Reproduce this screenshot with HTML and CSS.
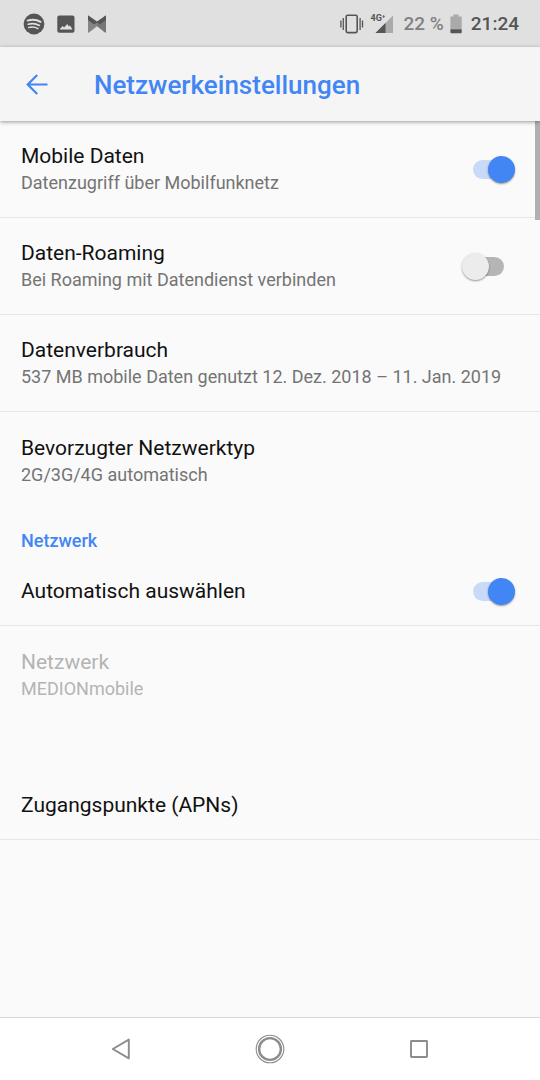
FILE: index.html
```html
<!DOCTYPE html>
<html lang="de">
<head>
<meta charset="utf-8">
<meta name="viewport" content="width=device-width, initial-scale=1">
<title>Netzwerkeinstellungen</title>
<link rel="stylesheet" href="styles.css">
</head>
<body>
<div class="status-bar">
  <div class="notifications">
    <svg width="22" height="22" viewBox="0 0 22 22" aria-hidden="true">
      <circle cx="11" cy="11" r="10.4" fill="#555"/>
      <g fill="none" stroke="#e0e0e0" stroke-linecap="round">
        <path d="M4.6 7.6c4.6-1.3 9.2-.9 13 1.2" stroke-width="2"/>
        <path d="M5.2 11.2c3.9-1.1 7.8-.7 11.2 1.2" stroke-width="1.7"/>
        <path d="M5.7 14.5c3.3-.8 6.5-.5 9.2 1.1" stroke-width="1.4"/>
      </g>
    </svg>
    <svg width="18" height="18" viewBox="0 0 18 18" aria-hidden="true">
      <rect x="0.3" y="0.5" width="17.2" height="17.2" rx="2" fill="#555"/>
      <path d="M2.5 14.5L5.6 11l1.5 1.6L10.300 9l1.500 2.500 1.200-.900 2.500 3.900z" fill="#e0e0e0"/>
    </svg>
    <svg width="20" height="18" viewBox="0 0 20 18" aria-hidden="true">
      <path d="M1 1.2Q1 .1 2 .9L10 7.5v3.8L2 17.6Q1 18.2 1 17z" fill="#858585"/>
      <path d="M19 1.2Q19 .1 18 .9L10 7.5v3.8l8 6.3q1 .6 1-.6z" fill="#777"/>
      <path d="M1 1.2Q1 .1 2 .9L10 6.500 18 .9q1-.8 1 .3V5l-6 4.500L10 7.500 7 9.500 1 5z" fill="#555"/>
    </svg>
  </div>
  <div class="indicators">
    <svg width="24" height="20" viewBox="0 0 24 20" aria-hidden="true">
      <rect x="6.2" y="1.2" width="11" height="17.4" rx="1.5" fill="none" stroke="#555" stroke-width="1.6"/>
      <path d="M3.300 4v12M20.100 4v12M.9 6.500v7M22.500 6.500v7" stroke="#555" stroke-width="1.3"/>
    </svg>
    <div class="signal">
      <svg width="24" height="20" viewBox="0 0 24 20" aria-hidden="true">
        <path d="M23 1.500V19H5.500z" fill="#aaa"/>
        <path d="M15.500 9v10H5.500z" fill="#555"/>
      </svg>
      <span class="signal-type">4G⁺</span>
    </div>
    <span class="battery-level">22 %</span>
    <svg width="12" height="20" viewBox="0 0 12 20" aria-hidden="true">
      <path d="M3.300.5h5.200v2H11q.7 0 .7.700V15.500H.4V3.200q0-.7.700-.7h2.200z" fill="#aaa"/>
      <path d="M.4 15.300h11.300v3q0 .9-.9.900H1.300q-.9 0-.9-.9z" fill="#555"/>
    </svg>
    <time class="clock">21:24</time>
  </div>
</div>
<header class="app-bar">
  <button class="back" type="button" aria-label="Zurück">
    <svg width="24" height="24" viewBox="0 0 24 24" aria-hidden="true">
      <path d="M22.500 11.500H3M12.200 2L2.700 11.500l9.500 9.500" fill="none" stroke="#4285f4" stroke-width="2.200"/>
    </svg>
  </button>
  <h1 class="page-title">Netzwerkeinstellungen</h1>
</header>
<main class="settings">
  <label class="row divided">
    <span class="text"><span class="title">Mobile Daten</span><span class="summary">Datenzugriff über Mobilfunknetz</span></span>
    <input class="switch" type="checkbox" role="switch" checked>
  </label>
  <label class="row divided">
    <span class="text"><span class="title">Daten-Roaming</span><span class="summary">Bei Roaming mit Datendienst verbinden</span></span>
    <input class="switch" type="checkbox" role="switch">
  </label>
  <button class="row divided" type="button">
    <span class="text"><span class="title">Datenverbrauch</span><span class="summary">537 MB mobile Daten genutzt 12. Dez. 2018 – 11. Jan. 2019</span></span>
  </button>
  <button class="row" type="button">
    <span class="text"><span class="title">Bevorzugter Netzwerktyp</span><span class="summary">2G/3G/4G automatisch</span></span>
  </button>
  <h2 class="category">Netzwerk</h2>
  <label class="row single divided">
    <span class="text"><span class="title">Automatisch auswählen</span></span>
    <input class="switch" type="checkbox" role="switch" checked>
  </label>
  <button class="row" type="button" disabled>
    <span class="text"><span class="title">Netzwerk</span><span class="summary">MEDIONmobile</span></span>
  </button>
  <div class="category"></div>
  <button class="row single divided" type="button">
    <span class="text"><span class="title">Zugangspunkte (APNs)</span></span>
  </button>
  <div class="scroll-thumb"></div>
</main>
<nav class="nav-bar">
  <button class="nav-button" type="button" aria-label="Zurück">
    <svg width="30" height="30" viewBox="0 0 30 30" aria-hidden="true">
      <path d="M22.800 5.600v18.800L6.800 15z" fill="none" stroke="#8c8c8c" stroke-width="1.900" stroke-linejoin="round"/>
    </svg>
  </button>
  <button class="nav-button" type="button" aria-label="Startbildschirm">
    <svg width="30" height="30" viewBox="0 0 30 30" aria-hidden="true">
      <circle cx="15" cy="15" r="13.800" fill="none" stroke="#8c8c8c" stroke-width="1.100"/>
      <circle cx="15" cy="15" r="10.900" fill="none" stroke="#8c8c8c" stroke-width="2.400"/>
    </svg>
  </button>
  <button class="nav-button" type="button" aria-label="Übersicht">
    <svg width="30" height="30" viewBox="0 0 30 30" aria-hidden="true">
      <rect x="7" y="7" width="16" height="16" rx=".5" fill="none" stroke="#8c8c8c" stroke-width="1.900"/>
    </svg>
  </button>
</nav>
</body>
</html>
```
FILE: styles.css
```css
* {
  box-sizing: border-box;
}

body {
  margin: 0;
  min-height: 100vh;
  display: flex;
  flex-direction: column;
  background: #fafafa;
  color: #111;
  font-family: Roboto, "Liberation Sans", sans-serif;
}

button {
  border: 0;
  padding: 0;
  background: none;
  color: inherit;
  font: inherit;
  text-align: left;
}

svg {
  display: block;
  flex: none;
}

.status-bar {
  display: flex;
  justify-content: space-between;
  align-items: center;
  height: 47px;
  padding: 0 21px 0 23px;
  background: #e0e0e0;
}

.notifications {
  display: flex;
  align-items: center;
  gap: 12px;
}

.indicators {
  display: flex;
  align-items: center;
  gap: 6px;
  color: #555;
  font-size: 19px;
  line-height: 24px;
  font-weight: 500;
}

.signal {
  position: relative;
}

.signal-type {
  position: absolute;
  left: 0;
  top: 0;
  font-size: 9px;
  line-height: 9px;
  font-weight: 700;
}

.battery-level {
  padding-left: 3px;
  color: #808080;
}

.clock {
  padding-left: 3px;
}

.app-bar {
  position: relative;
  z-index: 1;
  display: flex;
  align-items: center;
  gap: 45px;
  height: 74px;
  padding: 2px 25px 0;
  background: #f5f5f5;
  box-shadow: 0 1px 4px rgba(0, 0, 0, 0.4);
}

.page-title {
  margin: 0;
  color: #4285f4;
  font-size: 26px;
  line-height: 32px;
  font-weight: 500;
}

.settings {
  position: relative;
  flex: 1;
  display: flex;
  flex-direction: column;
}

.row {
  display: flex;
  align-items: center;
  justify-content: space-between;
  min-height: 97px;
  padding: 0 25px 0 21px;
}

.row.single {
  min-height: 69px;
}

.divided {
  border-bottom: 1px solid #e6e6e6;
}

.text {
  display: flex;
  flex-direction: column;
  gap: 2px;
}

.title {
  font-size: 21px;
  line-height: 26px;
}

.summary {
  color: #747474;
  font-size: 18px;
  line-height: 24px;
}

.row:disabled .title,
.row:disabled .summary {
  color: #b4b4b4;
}

.category {
  min-height: 48px;
  margin: 0;
  padding: 20px 21px 0;
  color: #4285f4;
  font-size: 18px;
  line-height: 24px;
  font-weight: 500;
}

.switch {
  appearance: none;
  position: relative;
  flex: none;
  display: flex;
  align-items: center;
  width: 53px;
  height: 27px;
  margin: 0;
}

.switch::before {
  content: "";
  position: absolute;
  left: 11px;
  right: 11px;
  top: 4px;
  height: 19px;
  border-radius: 10px;
  background: #b5b5b5;
}

.switch::after {
  content: "";
  position: relative;
  width: 27px;
  height: 27px;
  border-radius: 50%;
  background: #ececec;
  box-shadow: 0 1px 2px rgba(0, 0, 0, 0.4);
}

.switch:checked {
  justify-content: flex-end;
}

.switch:checked::before {
  background: #c8daf7;
}

.switch:checked::after {
  background: #4285f4;
}

.scroll-thumb {
  position: absolute;
  top: 0;
  right: 0;
  width: 5px;
  height: 99px;
  background: #b0b0b0;
}

.nav-bar {
  display: flex;
  align-items: center;
  justify-content: center;
  gap: 119px;
  height: 63px;
  padding-bottom: 1px;
  border-top: 1px solid #d6d6d6;
  background: #fff;
}
```
